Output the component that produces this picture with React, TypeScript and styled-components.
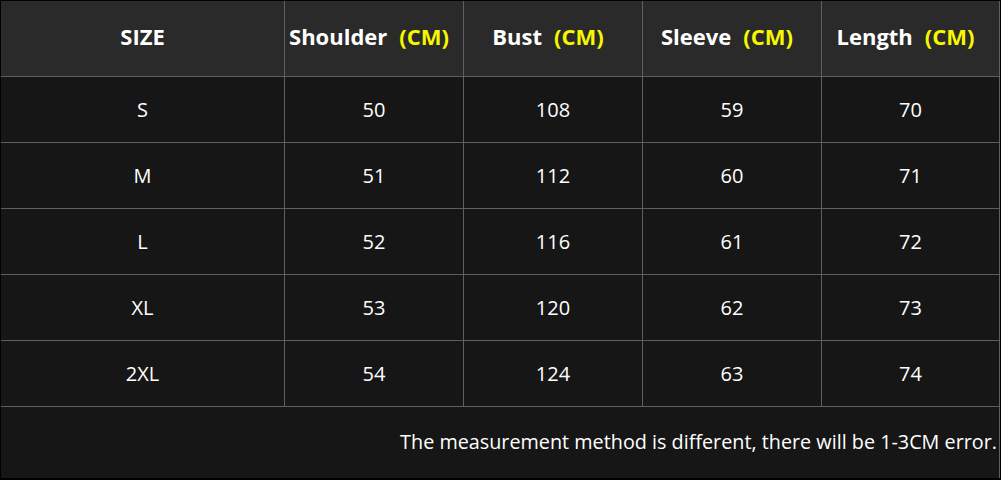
import { createGlobalStyle, styled } from "styled-components";

const GlobalStyle = createGlobalStyle`
  html, body {
    margin: 0;
    padding: 0;
    background: #000;
  }
`;

const HEADERS = ["Shoulder", "Bust", "Sleeve", "Length"];

const ROWS = [
  ["S", "50", "108", "59", "70"],
  ["M", "51", "112", "60", "71"],
  ["L", "52", "116", "61", "72"],
  ["XL", "53", "120", "62", "73"],
  ["2XL", "54", "124", "63", "74"],
];

const App = () => {
  return (
    <>
      <GlobalStyle />
      <Frame>
        <SizeGrid>
          <HeadCell>SIZE</HeadCell>
          {HEADERS.map((h) => (
            <HeadCell key={h}>
              {h}
              <Unit>(CM)</Unit>
            </HeadCell>
          ))}

          {ROWS.map((row) =>
            row.map((value, i) => <Cell key={row[0] + i}>{value}</Cell>)
          )}

          <Note>
            The measurement method is different, there will be 1-3CM error.
          </Note>
        </SizeGrid>
      </Frame>
    </>
  );
};

const Frame = styled.div`
  width: 1001px;
  height: 480px;
  box-sizing: border-box;
  padding: 1px 1px 2px 1px;
  background: #000;
  font-family: "Open Sans", "Noto Sans", sans-serif;
  color: #fff;
`;

const SizeGrid = styled.div`
  display: grid;
  grid-template-columns: 283px 178px 178px 178px 177px;
  grid-template-rows: 75px repeat(5, 65px) 1fr;
  gap: 1px;
  height: 100%;
  padding-right: 1px;
  background: #5f5f5f;
`;

const HeadCell = styled.div`
  display: flex;
  align-items: center;
  justify-content: center;
  background: #2a2a2a;
  font-size: 22px;
  font-weight: 700;
  padding-bottom: 5px;
`;

const Unit = styled.span`
  color: #f7f700;
  margin-left: 12px;
  margin-right: 10px;
`;

const Cell = styled.div`
  display: flex;
  align-items: center;
  justify-content: center;
  background: #161616;
  font-size: 20px;
`;

const Note = styled.div`
  grid-column: 1 / -1;
  display: flex;
  align-items: center;
  justify-content: flex-end;
  padding: 0 2px 2px 0;
  background: #161616;
  font-size: 19.8px;
`;

export default App;
